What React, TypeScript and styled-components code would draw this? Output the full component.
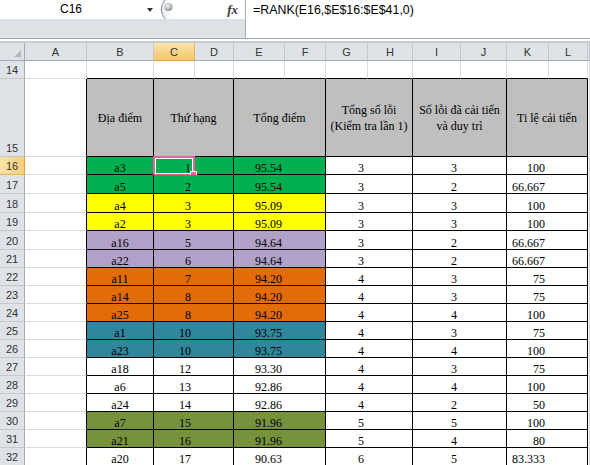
import React from "react";
import styled, { createGlobalStyle } from "styled-components";

const GRID = "#D9DBDE";
const INK = "#000000";
const HEAD_BG = "#DFE3E8";
const HEAD_LINE = "#C3C8CF";
const HEAD_EDGE = "#A4AAB3";
const PICK = "#E8619F";

// column widths in px: row numbers, then A..L
const COLS = [25, 62, 67, 41, 39, 51, 41, 42, 45, 48, 46, 42, 39];
const LETTERS = ["A", "B", "C", "D", "E", "F", "G", "H", "I", "J", "K", "L"];
const TEMPLATE = COLS.map((w) => `${w}px`).join(" ") + " 1fr";

const FILL = {
  green: "#00B050",
  yellow: "#FFFF00",
  lilac: "#B1A0C7",
  orange: "#E26B0A",
  teal: "#31869B",
  olive: "#76933C",
  none: "#FFFFFF",
};

type Entry = {
  n: number;
  h: number;
  place: string;
  rank: number;
  total: string;
  errs: number;
  fixed: number;
  rate: string;
  fill: keyof typeof FILL;
};

const ROWS: Entry[] = [
  { n: 16, h: 18, place: "a3", rank: 1, total: "95.54", errs: 3, fixed: 3, rate: "100", fill: "green" },
  { n: 17, h: 19, place: "a5", rank: 2, total: "95.54", errs: 3, fixed: 2, rate: "66.667", fill: "green" },
  { n: 18, h: 19, place: "a4", rank: 3, total: "95.09", errs: 3, fixed: 3, rate: "100", fill: "yellow" },
  { n: 19, h: 18, place: "a2", rank: 3, total: "95.09", errs: 3, fixed: 3, rate: "100", fill: "yellow" },
  { n: 20, h: 19, place: "a16", rank: 5, total: "94.64", errs: 3, fixed: 2, rate: "66.667", fill: "lilac" },
  { n: 21, h: 18, place: "a22", rank: 6, total: "94.64", errs: 3, fixed: 2, rate: "66.667", fill: "lilac" },
  { n: 22, h: 18, place: "a11", rank: 7, total: "94.20", errs: 4, fixed: 3, rate: "75", fill: "orange" },
  { n: 23, h: 18, place: "a14", rank: 8, total: "94.20", errs: 4, fixed: 3, rate: "75", fill: "orange" },
  { n: 24, h: 18, place: "a25", rank: 8, total: "94.20", errs: 4, fixed: 4, rate: "100", fill: "orange" },
  { n: 25, h: 18, place: "a1", rank: 10, total: "93.75", errs: 4, fixed: 3, rate: "75", fill: "teal" },
  { n: 26, h: 18, place: "a23", rank: 10, total: "93.75", errs: 4, fixed: 4, rate: "100", fill: "teal" },
  { n: 27, h: 18, place: "a18", rank: 12, total: "93.30", errs: 4, fixed: 3, rate: "75", fill: "none" },
  { n: 28, h: 18, place: "a6", rank: 13, total: "92.86", errs: 4, fixed: 4, rate: "100", fill: "none" },
  { n: 29, h: 18, place: "a24", rank: 14, total: "92.86", errs: 4, fixed: 2, rate: "50", fill: "none" },
  { n: 30, h: 18, place: "a7", rank: 15, total: "91.96", errs: 5, fixed: 5, rate: "100", fill: "olive" },
  { n: 31, h: 18, place: "a21", rank: 16, total: "91.96", errs: 5, fixed: 4, rate: "80", fill: "olive" },
  { n: 32, h: 18, place: "a20", rank: 17, total: "90.63", errs: 6, fixed: 5, rate: "83.333", fill: "none" },
];

const GlobalStyle = createGlobalStyle`
  html, body {
    margin: 0;
    padding: 0;
    background: #fff;
  }
  body {
    font-family: "Liberation Sans", Arial, sans-serif;
  }
`;

const Screen = styled.div`
  width: 590px;
  height: 465px;
  overflow: hidden;
  display: flex;
  flex-direction: column;
  background: #fff;
`;

const FormulaBar = styled.div`
  display: flex;
  height: 38px;
  flex: none;
`;

const NamePane = styled.div`
  width: 246px;
  box-sizing: border-box;
  display: flex;
  flex-direction: column;
  border-right: 1px solid #a9aeb5;
`;

const NameRow = styled.div`
  height: 19px;
  display: flex;
  align-items: center;
  background: #fff;
`;

const NameBox = styled.div`
  width: 142px;
  text-align: center;
  font-size: 12px;
  line-height: 19px;
  color: #000;
`;

const DropArrow = styled.div`
  width: 15px;
  display: flex;
  justify-content: center;

  &::before {
    content: "";
    border-left: 3.5px solid transparent;
    border-right: 3.5px solid transparent;
    border-top: 4px solid #333;
  }
`;

const Grip = styled.svg`
  flex: none;
`;

const FxLabel = styled.span`
  margin-left: auto;
  margin-right: 7px;
  font: italic bold 13px "Liberation Serif", "Times New Roman", serif;
  color: #3a3a3a;
`;

const NameShelf = styled.div`
  flex: 1;
  background: #dee1e6;
`;

const FormulaText = styled.div`
  flex: 1;
  padding: 3px 0 0 7px;
  font-size: 12.4px;
  line-height: 14px;
  color: #000;
`;

const Splitter = styled.div`
  height: 5px;
  flex: none;
  box-sizing: border-box;
  border-top: 1px solid #a3a7ad;
  border-bottom: 2px solid #c9cdd3;
  background: #fff;
`;

const Row = styled.div<{ $h: number }>`
  display: grid;
  grid-template-columns: ${TEMPLATE};
  height: ${(p) => p.$h}px;
  flex: none;
`;

const Corner = styled.div`
  box-sizing: border-box;
  background: ${HEAD_BG};
  border-right: 1px solid ${HEAD_EDGE};
  border-bottom: 1px solid ${HEAD_EDGE};
  display: flex;
  align-items: flex-end;
  justify-content: flex-end;
  padding: 0 3px 3px 0;

  &::after {
    content: "";
    border-left: 7px solid transparent;
    border-bottom: 7px solid #b4b9c0;
  }
`;

const ColHead = styled.div<{ $active?: boolean }>`
  box-sizing: border-box;
  background: ${(p) => (p.$active ? "linear-gradient(#fbe4ab, #f3c66a)" : HEAD_BG)};
  border-right: 1px solid ${(p) => (p.$active ? "#e6b15c" : HEAD_LINE)};
  border-bottom: 1px solid ${(p) => (p.$active ? "#f29b38" : HEAD_EDGE)};
  display: flex;
  align-items: center;
  justify-content: center;
  font-size: 11px;
  color: #333;
`;

const RowNum = styled.div<{ $active?: boolean }>`
  box-sizing: border-box;
  background: ${(p) => (p.$active ? "linear-gradient(90deg, #fbe4ab, #f5cf7c)" : HEAD_BG)};
  border-right: 1px solid ${(p) => (p.$active ? "#f29b38" : HEAD_EDGE)};
  border-bottom: 1px solid ${(p) => (p.$active ? "#e6b15c" : HEAD_LINE)};
  display: flex;
  align-items: flex-end;
  justify-content: center;
  padding-bottom: 2px;
  font-size: 11px;
  line-height: 11px;
  color: #333;
`;

const Cell = styled.div<{
  $span?: number;
  $fill?: string;
  $right?: string;
  $bottom?: string;
  $center?: boolean;
  $pad?: number;
}>`
  grid-column: span ${(p) => p.$span ?? 1};
  position: relative;
  box-sizing: border-box;
  min-width: 0;
  background: ${(p) => p.$fill ?? "#fff"};
  border-right: 1px solid ${(p) => p.$right ?? GRID};
  border-bottom: 1px solid ${(p) => p.$bottom ?? GRID};
  display: flex;
  align-items: flex-end;
  justify-content: ${(p) => (p.$center ? "center" : "flex-end")};
  padding-right: ${(p) => p.$pad ?? 0}px;
  font-family: "Liberation Serif", "Times New Roman", serif;
  font-size: 12px;
  line-height: 12px;
  color: #000;
  white-space: nowrap;
`;

const HeadCell = styled.div<{ $span?: number }>`
  grid-column: span ${(p) => p.$span ?? 1};
  box-sizing: border-box;
  background: #bfbfbf;
  border-right: 1px solid ${INK};
  border-bottom: 1px solid ${INK};
  display: flex;
  align-items: center;
  justify-content: center;
  text-align: center;
  font-family: "Liberation Serif", "Times New Roman", serif;
  font-size: 12px;
  line-height: 16px;
  color: #000;
`;

const Selection = styled.div<{ $w: number }>`
  position: absolute;
  left: -1px;
  top: -1px;
  width: ${(p) => p.$w}px;
  height: 20px;
  box-sizing: border-box;
  border: 2px solid ${PICK};
  box-shadow: inset 0 0 0 1px #fff;

  &::after {
    content: "";
    position: absolute;
    right: -4px;
    bottom: -4px;
    width: 5px;
    height: 5px;
    background: ${PICK};
    border: 1px solid #fff;
  }
`;

const App: React.FC = () => {
  return (
    <Screen>
      <GlobalStyle />
      <FormulaBar>
        <NamePane>
          <NameRow>
            <NameBox>C16</NameBox>
            <DropArrow />
            <Grip width="20" height="19" viewBox="0 0 20 19">
              <defs>
                <radialGradient id="knob" cx="40%" cy="35%" r="65%">
                  <stop offset="0%" stopColor="#f4f5f6" />
                  <stop offset="100%" stopColor="#8f959c" />
                </radialGradient>
                <linearGradient id="lip" x1="0" x2="1">
                  <stop offset="0%" stopColor="#e4e7ea" />
                  <stop offset="60%" stopColor="#ffffff" />
                </linearGradient>
              </defs>
              <path d="M8 0 Q0.5 9.5 8 19 L20 19 L20 0 Z" fill="url(#lip)" />
              <path d="M8 0 Q0.5 9.5 8 19" fill="none" stroke="#9ea3aa" strokeWidth="1.2" />
              <circle cx="11.5" cy="7" r="4" fill="url(#knob)" />
            </Grip>
            <FxLabel>fx</FxLabel>
          </NameRow>
          <NameShelf />
        </NamePane>
        <FormulaText>=RANK(E16,$E$16:$E$41,0)</FormulaText>
      </FormulaBar>
      <Splitter />

      <Row $h={18}>
        <Corner />
        {LETTERS.map((l) => (
          <ColHead key={l} $active={l === "C"}>
            {l}
          </ColHead>
        ))}
        <ColHead />
      </Row>

      <Row $h={18}>
        <RowNum>14</RowNum>
        <Cell />
        {LETTERS.slice(1).map((l) => (
          <Cell key={l} $bottom={INK} />
        ))}
        <Cell />
      </Row>

      <Row $h={78}>
        <RowNum>15</RowNum>
        <Cell $right={INK} />
        <HeadCell>Địa điểm</HeadCell>
        <HeadCell $span={2}>Thứ hạng</HeadCell>
        <HeadCell $span={2}>Tổng điểm</HeadCell>
        <HeadCell $span={2}>
          Tổng số lỗi
          <br />
          (Kiểm tra lần 1)
        </HeadCell>
        <HeadCell $span={2}>
          Số lỗi đã cải tiến
          <br />
          và duy trì
        </HeadCell>
        <HeadCell $span={2}>Ti lệ cải tiến</HeadCell>
        <Cell />
      </Row>

      {ROWS.map((r) => {
        const fill = FILL[r.fill];
        return (
          <Row key={r.n} $h={r.h}>
            <RowNum $active={r.n === 16}>{r.n}</RowNum>
            <Cell $right={INK} />
            <Cell $fill={fill} $right={INK} $bottom={INK} $center>
              {r.place}
            </Cell>
            <Cell $span={2} $fill={fill} $right={INK} $bottom={INK} $pad={COLS[4] + 3}>
              {r.rank}
              {r.n === 16 && <Selection $w={COLS[3] + 1} />}
            </Cell>
            <Cell $span={2} $fill={fill} $right={INK} $bottom={INK} $pad={COLS[6] + 2}>
              {r.total}
            </Cell>
            <Cell $span={2} $right={INK} $bottom={INK} $pad={COLS[8] + 3}>
              {r.errs}
            </Cell>
            <Cell $span={2} $right={INK} $bottom={INK} $pad={COLS[10] + 3}>
              {r.fixed}
            </Cell>
            <Cell $span={2} $right={INK} $bottom={INK} $pad={COLS[12] + 3}>
              {r.rate}
            </Cell>
            <Cell />
          </Row>
        );
      })}
    </Screen>
  );
};

export default App;
